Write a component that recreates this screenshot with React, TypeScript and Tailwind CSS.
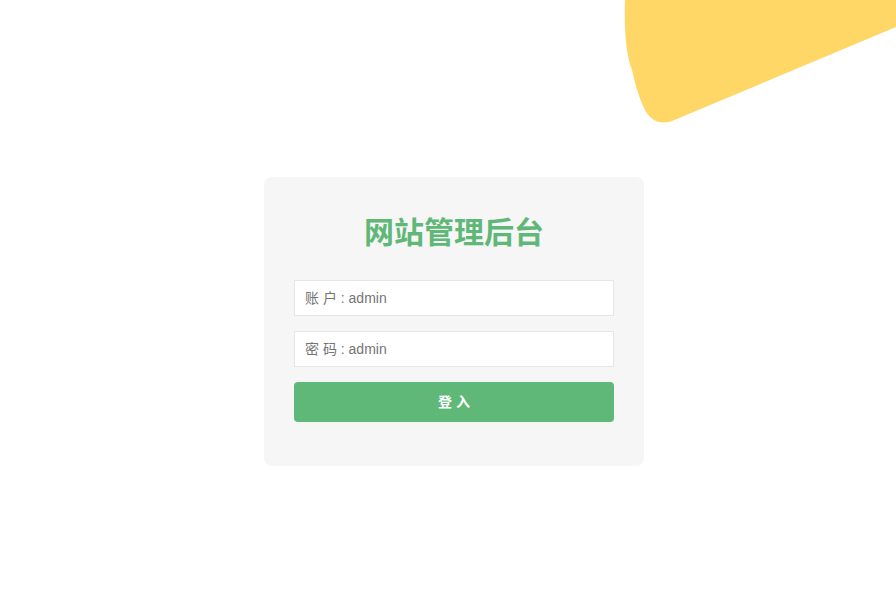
import React from 'react';

const App = () => {
  return (
    <div
      className="relative min-h-screen w-full overflow-hidden bg-white"
      style={{ fontFamily: '"Liberation Sans", "Noto Sans CJK SC", sans-serif' }}
    >
      {/* Decorative blob */}
      <svg
        className="absolute right-0 top-0"
        width="896"
        height="140"
        viewBox="0 0 896 140"
      >
        <path
          d="M625 0 C624 30 626 55 632 70 C636 88 640 100 645 110 C651 121 660 125 672 121 L896 27 L896 0 Z"
          fill="#fed766"
        />
      </svg>

      <div className="relative flex justify-center pl-[12px] pt-[177px]">
        <div className="w-[380px] rounded-lg bg-[#f6f6f6] px-[30px] pb-[44px] pt-[36px]">
          <h1 className="mb-[27px] text-center text-[30px] font-bold leading-[40px] text-[#5fb878]">
            网站管理后台
          </h1>
          <input
            className="mb-[15px] block h-[36px] w-full border border-[#e6e6e6] bg-white px-[10px] text-[14px] text-[#333] outline-none placeholder:text-[#757575]"
            placeholder="账 户 : admin"
          />
          <input
            type="password"
            className="mb-[15px] block h-[36px] w-full border border-[#e6e6e6] bg-white px-[10px] text-[14px] text-[#333] outline-none placeholder:text-[#757575]"
            placeholder="密 码 : admin"
          />
          <button className="block h-[40px] w-full rounded bg-[#5fb878] text-[14px] font-bold text-white">
            登 入
          </button>
        </div>
      </div>
    </div>
  );
};

export default App;
